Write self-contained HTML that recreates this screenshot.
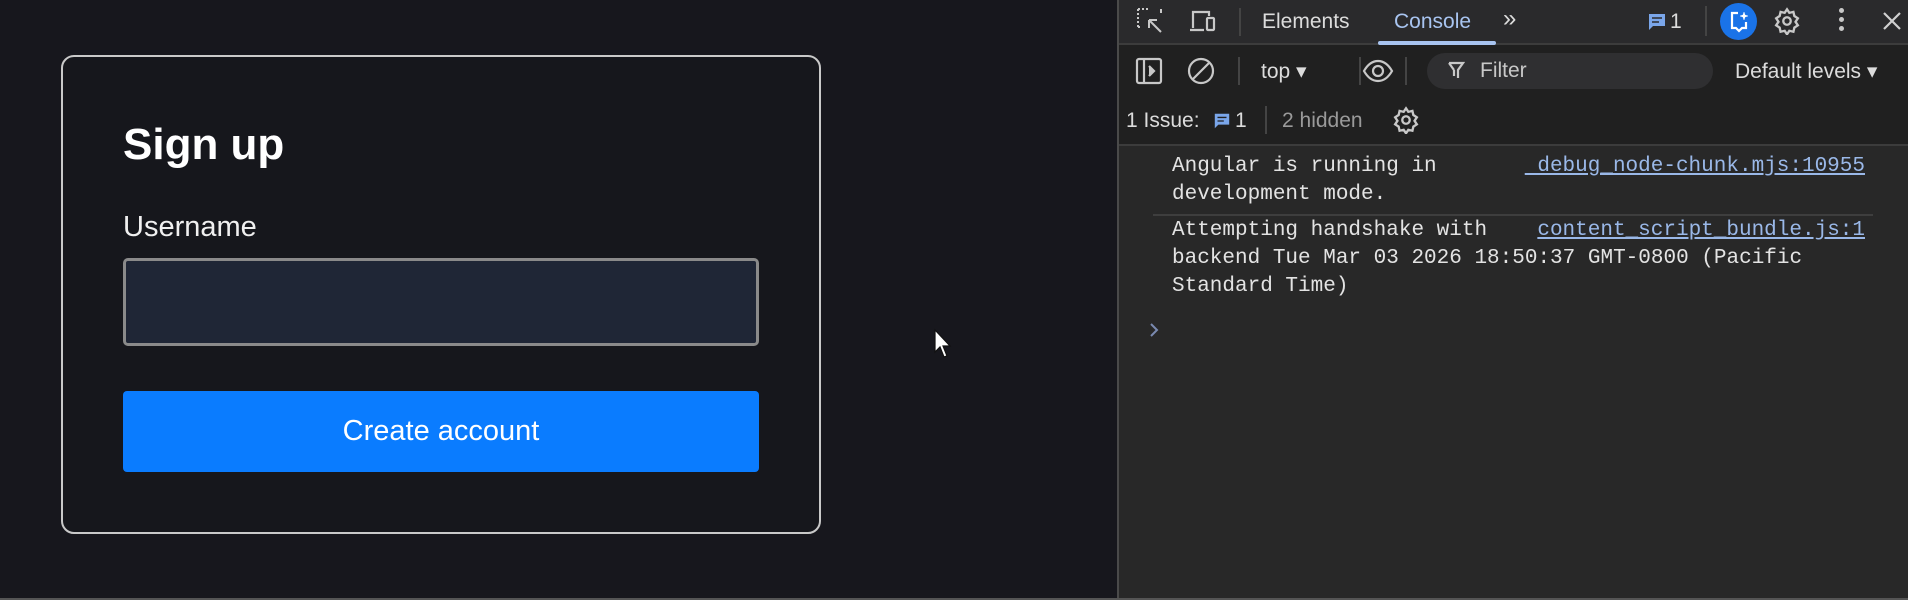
<!DOCTYPE html>
<html><head><meta charset="utf-8"><style>
*{margin:0;padding:0;box-sizing:border-box}
body{width:1908px;height:600px;background:#17171d;font-family:"Liberation Sans",sans-serif;position:relative;overflow:hidden}
.a{position:absolute}
.card{left:61px;top:55px;width:760px;height:479px;border:2px solid #c9c9c9;border-radius:13px;background:#16171c}
.dt{left:1117px;top:0;width:791px;height:600px;background:#282828;border-left:2px solid #4a4a4a}
.t{color:#dcdcdc;font-size:21px;white-space:nowrap}
.m{font-family:"Liberation Mono","DejaVu Sans Mono",monospace;font-size:21px;color:#e3e3e3;line-height:28px;white-space:pre}
.lk{color:#9ab8e8;text-decoration:underline}
svg{position:absolute}
</style></head><body>
<div class="a card"></div>
<div class="a" style="left:123px;top:120px;font-size:44px;font-weight:bold;color:#fff">Sign up</div>
<div class="a" style="left:123px;top:211px;font-size:29px;color:#f0f0f0">Username</div>
<div class="a" style="left:123px;top:258px;width:636px;height:88px;border:3px solid #8a8a8a;border-radius:5px;background:#1f2636"></div>
<div class="a" style="left:123px;top:391px;width:636px;height:81px;border-radius:4px;background:#0a7cff;color:#fff;font-size:29px;text-align:center;line-height:81px">Create account</div>
<svg style="left:933px;top:328px" width="22" height="32" viewBox="0 0 22 32"><path d="M2 2 L2 24 L7 19 L11 29 L14 28 L10 18 L17 18 Z" fill="#fff" stroke="#111" stroke-width="1.2"/></svg>

<div class="a dt">
 <div class="a" style="left:0;top:0;width:791px;height:45px;background:#2a2a2c;border-bottom:2px solid #3c3c3c"></div>
 <div class="a" style="left:0;top:45px;width:791px;height:101px;background:#202020;border-bottom:2px solid #3c3c3c"></div>
 <div class="a" style="left:259px;top:41px;width:118px;height:4px;background:#a8c4f0;border-radius:2px"></div>
</div>
<svg style="left:1135px;top:6px" width="32" height="32" viewBox="0 0 32 32" fill="none" stroke="#c8c8c8" stroke-width="2"><path d="M3 3h10M3 3v18M3 21h4" stroke-dasharray="2 2"/><path d="M26 3v4"/><path d="M14 14l12 12M14 14h8M14 14v8"/></svg>
<svg style="left:1187px;top:6px" width="32" height="32" viewBox="0 0 32 32" fill="none" stroke="#c8c8c8" stroke-width="2.2"><path d="M6 22V6h16v4M3 24h14"/><rect x="20" y="12" width="7" height="12" rx="1"/></svg>
<div class="a" style="left:1239px;top:8px;width:2px;height:28px;background:#444"></div>
<div class="a t" style="left:1262px;top:10px">Elements</div>
<div class="a t" style="left:1394px;top:10px;color:#a8c4f0">Console</div>
<div class="a t" style="left:1503px;top:5px;font-size:24px">»</div>
<svg style="left:1647px;top:12px" width="20" height="20" viewBox="0 0 20 20"><path d="M2 2h16v12H6l-4 4z" fill="#7aa6ea"/><path d="M5 6h10M5 10h7" stroke="#2a2a2c" stroke-width="1.5"/></svg>
<div class="a t" style="left:1670px;top:10px">1</div>
<div class="a" style="left:1705px;top:6px;width:2px;height:30px;background:#444"></div>
<div class="a" style="left:1720px;top:3px;width:37px;height:37px;border-radius:50%;background:#1a73e8"></div>
<svg style="left:1728px;top:10px" width="22" height="24" viewBox="0 0 22 24" fill="none" stroke="#fff" stroke-width="2.2"><path d="M10 3H4v15h4l3 3 3-3h4v-6"/><path d="M16 2l1 3 3 1-3 1-1 3-1-3-3-1 3-1z" fill="#fff" stroke-width="0.5"/></svg>
<svg style="left:1773px;top:7px" width="28" height="28" viewBox="0 0 24 24" fill="none" stroke="#c8c8c8" stroke-width="2"><circle cx="12" cy="12" r="3.2"/><path d="M12 2l2 3 3.5-.8.8 3.5 3 2-2 3 2 3-3 2-.8 3.5-3.5-.8-2 3-2-3-3.5.8-.8-3.5-3-2 2-3-2-3 3-2 .8-3.5L10 5z"/></svg>
<div class="a" style="left:1839px;top:8px;width:5px;height:5px;border-radius:50%;background:#c8c8c8;box-shadow:0 9px #c8c8c8,0 18px #c8c8c8"></div>
<svg style="left:1882px;top:11px" width="20" height="20" viewBox="0 0 20 20" stroke="#d0d0d0" stroke-width="2.2"><path d="M2 2l16 16M18 2L2 18"/></svg>
<svg style="left:1135px;top:57px" width="28" height="28" viewBox="0 0 28 28" fill="none" stroke="#c8c8c8" stroke-width="2.2"><rect x="2" y="2" width="24" height="24" rx="2"/><path d="M9 2v24"/><path d="M14 9l5 5-5 5" fill="#c8c8c8"/></svg>
<svg style="left:1187px;top:57px" width="28" height="28" viewBox="0 0 28 28" fill="none" stroke="#c8c8c8" stroke-width="2.2"><circle cx="14" cy="14" r="12"/><path d="M6 22L22 6"/></svg>
<div class="a" style="left:1238px;top:57px;width:2px;height:28px;background:#444"></div>
<div class="a t" style="left:1261px;top:59px">top ▾</div>
<div class="a" style="left:1359px;top:57px;width:2px;height:28px;background:#444"></div>
<svg style="left:1362px;top:57px" width="32" height="28" viewBox="0 0 32 28" fill="none" stroke="#c8c8c8" stroke-width="2.2"><path d="M2 14c4-7 9-10 14-10s10 3 14 10c-4 7-9 10-14 10S6 21 2 14z"/><circle cx="16" cy="14" r="5"/></svg>
<div class="a" style="left:1405px;top:57px;width:2px;height:28px;background:#444"></div>
<div class="a" style="left:1427px;top:53px;width:286px;height:36px;border-radius:18px;background:#2f2f31"></div>
<svg style="left:1447px;top:61px" width="18" height="20" viewBox="0 0 18 20" fill="none" stroke="#c8c8c8" stroke-width="2.2"><path d="M2 2h14l-5 7v8M7 9v6M2 2l5 7"/></svg>
<div class="a t" style="left:1480px;top:59px;color:#c8c8c8">Filter</div>
<div class="a t" style="left:1735px;top:59px">Default levels ▾</div>
<div class="a t" style="left:1126px;top:109px">1 Issue:</div>
<svg style="left:1213px;top:112px" width="18" height="18" viewBox="0 0 20 20"><path d="M2 2h16v12H6l-4 4z" fill="#7aa6ea"/><path d="M5 6h10M5 10h7" stroke="#202020" stroke-width="1.5"/></svg>
<div class="a t" style="left:1235px;top:109px">1</div>
<div class="a" style="left:1265px;top:106px;width:2px;height:28px;background:#444"></div>
<div class="a t" style="left:1282px;top:109px;color:#9a9a9a">2 hidden</div>
<svg style="left:1392px;top:106px" width="28" height="28" viewBox="0 0 24 24" fill="none" stroke="#c8c8c8" stroke-width="2"><circle cx="12" cy="12" r="3.2"/><path d="M12 2l2 3 3.5-.8.8 3.5 3 2-2 3 2 3-3 2-.8 3.5-3.5-.8-2 3-2-3-3.5.8-.8-3.5-3-2 2-3-2-3 3-2 .8-3.5L10 5z"/></svg>
<div class="a m" style="left:1172px;top:153px">Angular is running in
development mode.</div>
<div class="a m lk" style="left:1500px;top:153px;width:365px;text-align:right"> debug_node-chunk.mjs:10955</div>
<div class="a" style="left:1153px;top:214px;width:720px;height:2px;background:#3e3e3e"></div>
<div class="a m" style="left:1172px;top:217px">Attempting handshake with
backend Tue Mar 03 2026 18:50:37 GMT-0800 (Pacific
Standard Time)</div>
<div class="a m lk" style="left:1500px;top:217px;width:365px;text-align:right">content_script_bundle.js:1</div>
<svg style="left:1148px;top:322px" width="12" height="16" viewBox="0 0 12 16" fill="none" stroke="#7a8ab0" stroke-width="2"><path d="M3 2l6 6-6 6"/></svg>
<div class="a" style="left:0;top:598px;width:1908px;height:2px;background:#555"></div>
</body></html>
